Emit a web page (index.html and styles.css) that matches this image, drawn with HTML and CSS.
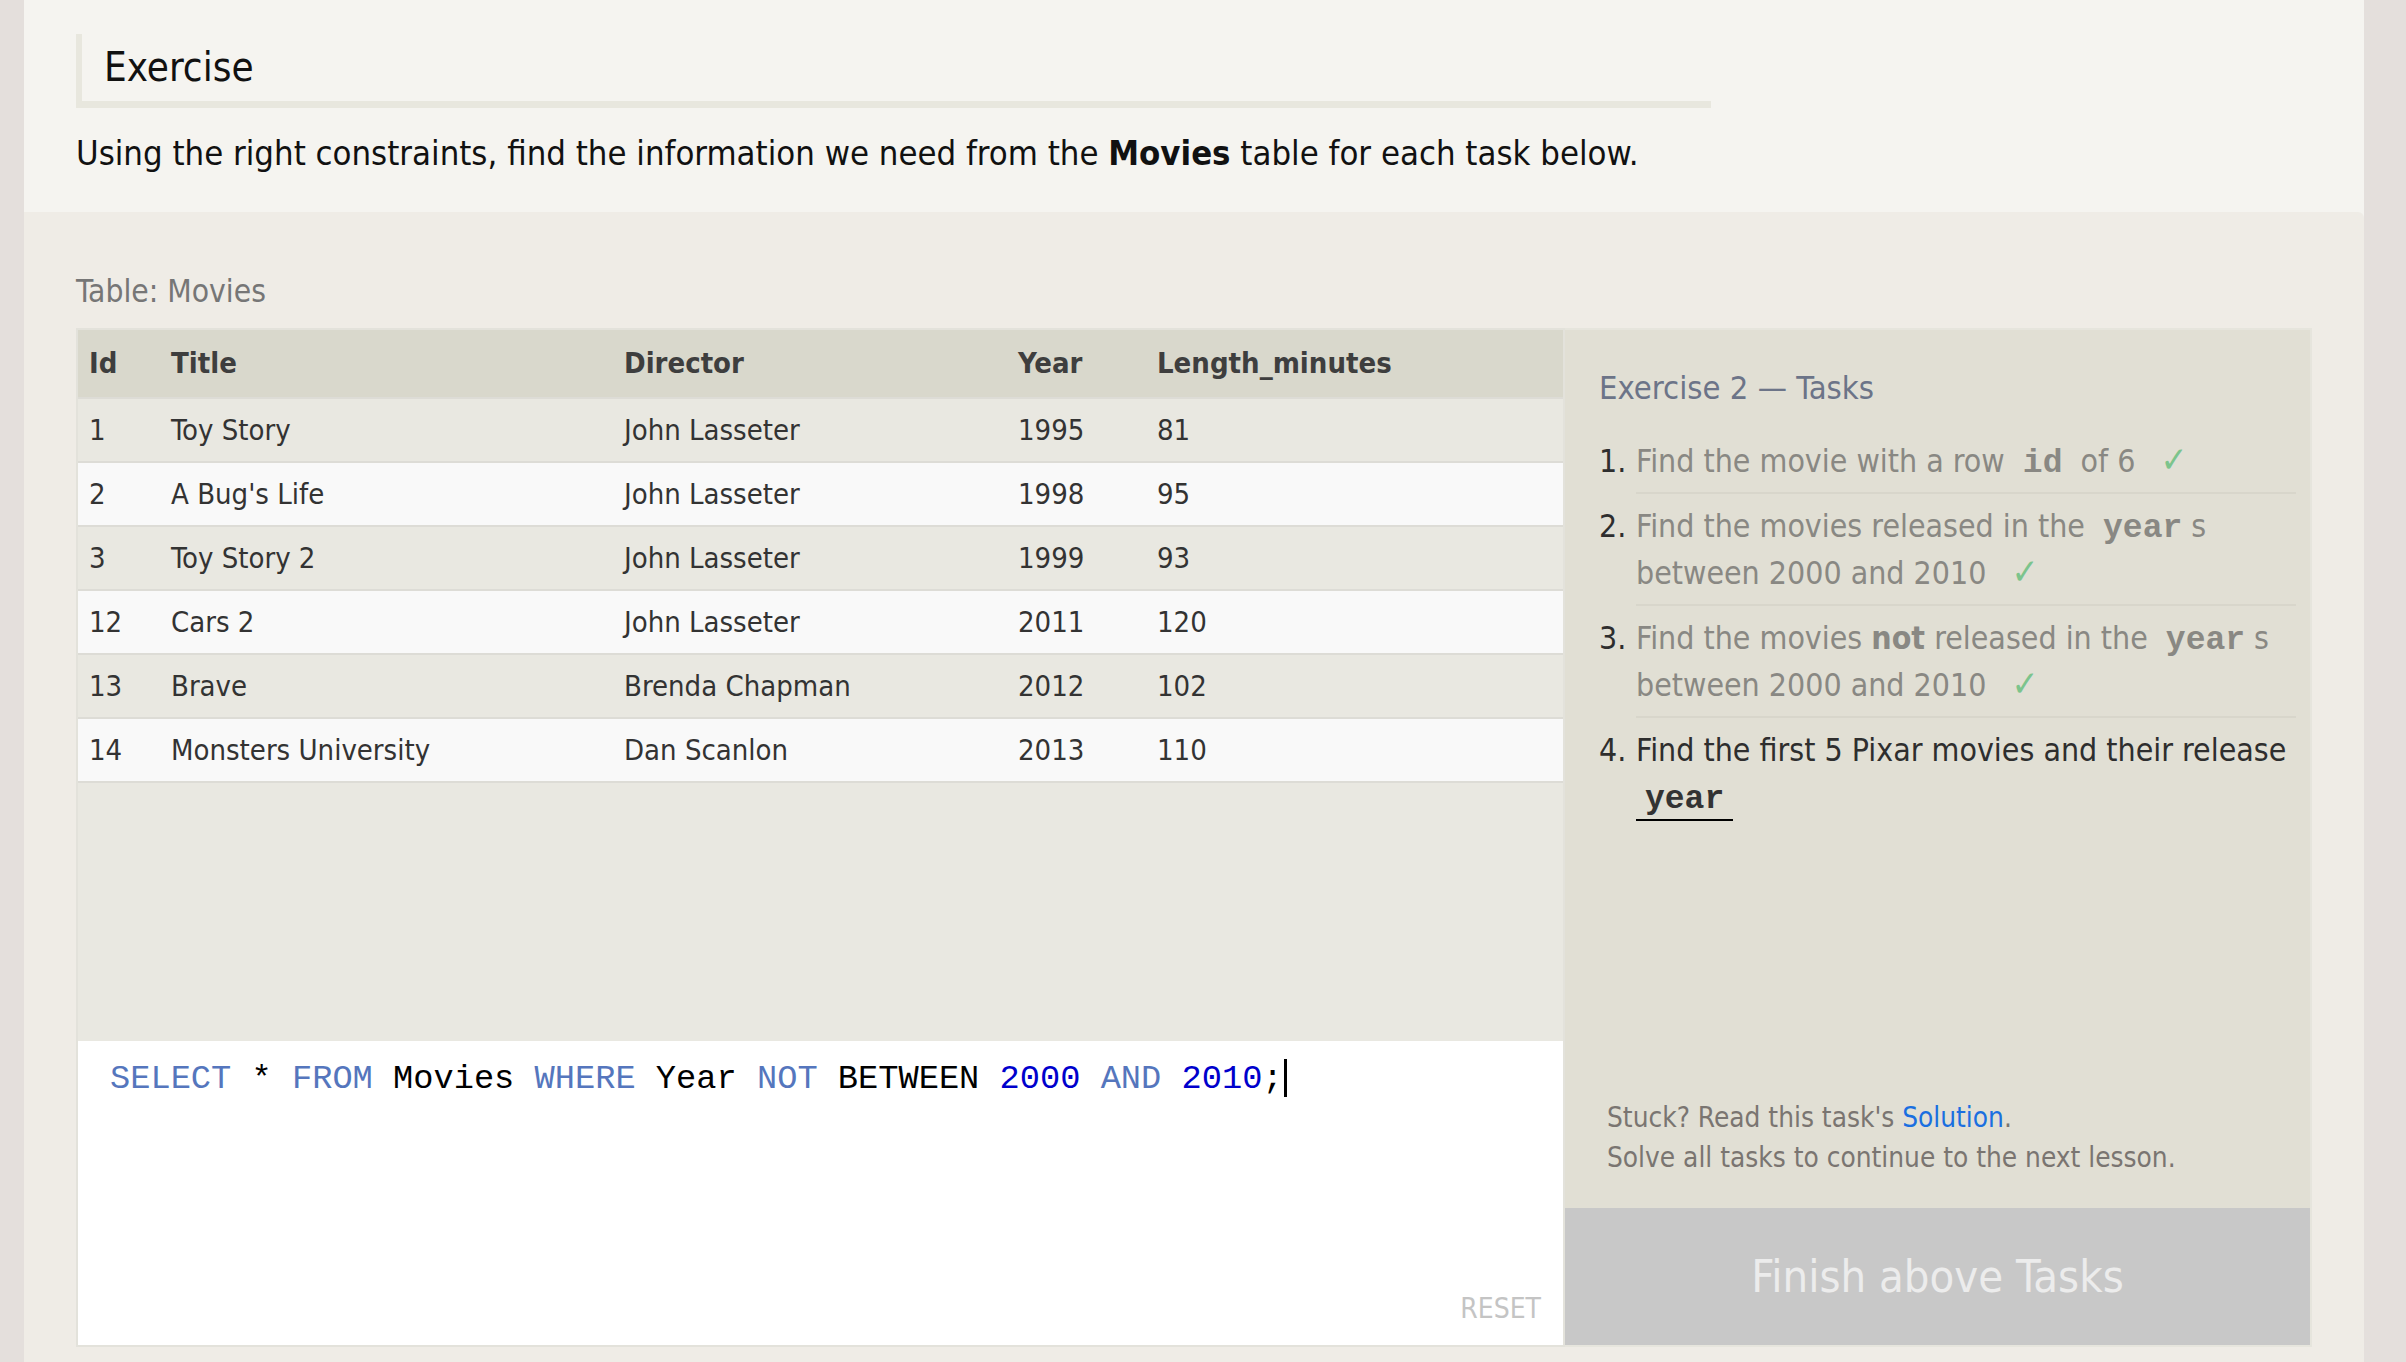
FILE: index.html
```html
<!DOCTYPE html>
<html lang="en">
<head>
<meta charset="utf-8">
<title>SQL Exercise</title>
<link rel="stylesheet" href="styles.css">
</head>
<body>
<div class="page">
  <section class="intro">
    <h2 class="intro-title">Exercise</h2>
    <p class="intro-text">Using the right constraints, find the information we need from the <strong>Movies</strong> table for each task below.</p>
  </section>
  <section class="content">
    <div class="table-label">Table: Movies</div>
    <div class="exercise">
      <div class="left">
        <table class="movies">
          <colgroup>
            <col class="c-id"><col class="c-title"><col class="c-dir"><col class="c-year"><col class="c-len">
          </colgroup>
          <thead>
            <tr><th>Id</th><th>Title</th><th>Director</th><th>Year</th><th>Length_minutes</th></tr>
          </thead>
          <tbody>
            <tr><td>1</td><td>Toy Story</td><td>John Lasseter</td><td>1995</td><td>81</td></tr>
            <tr><td>2</td><td>A Bug's Life</td><td>John Lasseter</td><td>1998</td><td>95</td></tr>
            <tr><td>3</td><td>Toy Story 2</td><td>John Lasseter</td><td>1999</td><td>93</td></tr>
            <tr><td>12</td><td>Cars 2</td><td>John Lasseter</td><td>2011</td><td>120</td></tr>
            <tr><td>13</td><td>Brave</td><td>Brenda Chapman</td><td>2012</td><td>102</td></tr>
            <tr><td>14</td><td>Monsters University</td><td>Dan Scanlon</td><td>2013</td><td>110</td></tr>
          </tbody>
        </table>
        <div class="table-fill"></div>
        <div class="editor">
          <div class="code"><span class="kw">SELECT</span> * <span class="kw">FROM</span> Movies <span class="kw">WHERE</span> Year <span class="kw">NOT</span> BETWEEN <span class="num">2000</span> <span class="kw">AND</span> <span class="num">2010</span>;<span class="caret"></span></div>
          <div class="reset">RESET</div>
        </div>
      </div>
      <div class="right">
        <div class="tasks">
          <h3 class="tasks-title">Exercise 2 — Tasks</h3>
          <ol class="task-list">
            <li class="task done"><span class="task-num">1.</span><div class="task-body">Find the movie with a row <code>id</code> of 6 <span class="check">✓</span></div></li>
            <li class="task done"><span class="task-num">2.</span><div class="task-body">Find the movies released in the <code>year</code>s between 2000 and 2010 <span class="check">✓</span></div></li>
            <li class="task done"><span class="task-num">3.</span><div class="task-body">Find the movies <strong>not</strong> released in the <code>year</code>s between 2000 and 2010 <span class="check">✓</span></div></li>
            <li class="task current"><span class="task-num">4.</span><div class="task-body">Find the first 5 Pixar movies and their release <code>year</code></div></li>
          </ol>
        </div>
        <div class="help">
          <div>Stuck? Read this task's <a class="link" href="#">Solution</a>.</div>
          <div>Solve all tasks to continue to the next lesson.</div>
        </div>
        <div class="finish">Finish above Tasks</div>
      </div>
    </div>
  </section>
</div>
</body>
</html>
```
FILE: styles.css
```css
html, body {
  margin: 0;
  padding: 0;
}
body {
  background: #e4dfdc;
  font-family: "DejaVu Sans Condensed", "DejaVu Sans", sans-serif;
  font-stretch: condensed;
  color: #111;
  height: 1362px;
  overflow: hidden;
}
.page {
  margin: 0 42px 0 24px;
  background: #f5f4f0;
  height: 1362px;
  display: flex;
  flex-direction: column;
}
.intro {
  padding: 34px 52px 0 52px;
  height: 178px;
}
.intro-title {
  margin: 0;
  width: 1607px;
  height: 67px;
  line-height: 67px;
  font-size: 40px;
  font-weight: normal;
  padding-left: 22px;
  border-left: 6px solid #e8e7de;
  border-bottom: 7px solid #e8e7de;
  color: #111;
}
.intro-text {
  margin: 21px 0 0 0;
  font-size: 34.4px;
  line-height: 48px;
  color: #111;
}
.intro-text strong {
  font-weight: bold;
}
.content {
  flex: 1;
  background: #efece6;
  border-top-right-radius: 6px;
  padding: 57px 52px 0 52px;
}
.table-label {
  font-size: 31.5px;
  line-height: 44px;
  color: #767676;
  margin-bottom: 15px;
}
.exercise {
  display: flex;
  height: 1019px;
}
.left {
  width: 1485px;
  border: 2px solid #e3e2db;
  background: #e9e8e1;
  display: flex;
  flex-direction: column;
}
.movies {
  width: 100%;
  border-collapse: collapse;
  table-layout: fixed;
  font-size: 29px;
  color: #333;
}
.c-id { width: 82px; }
.c-title { width: 453px; }
.c-dir { width: 394px; }
.c-year { width: 139px; }
.movies th {
  background: #d9d8cc;
  height: 67px;
  line-height: 67px;
  padding: 0 0 0 11px;
  text-align: left;
  font-weight: bold;
  color: #3e3e3e;
}
.movies td {
  height: 62px;
  line-height: 62px;
  padding: 0 0 0 11px;
  border-top: 2px solid #dddcd6;
  white-space: nowrap;
}
.movies tbody tr:nth-child(odd) td {
  background: #e9e8e1;
}
.movies tbody tr:nth-child(even) td {
  background: #f9f9f9;
}
.table-fill {
  flex: 1;
  border-top: 2px solid #dddcd6;
}
.editor {
  height: 304px;
  background: #ffffff;
  display: flex;
  flex-direction: column;
  box-sizing: border-box;
  padding: 14px 22px 18px 32px;
}
.code {
  flex: 1;
  font-family: "Liberation Mono", "Courier New", monospace;
  font-size: 33.7px;
  line-height: 48px;
  color: #000;
  white-space: pre;
}
.kw { color: #5576bd; }
.num { color: #0000cc; }
.caret {
  display: inline-block;
  width: 3px;
  height: 38px;
  background: #000;
  vertical-align: -9px;
  margin-left: 1px;
}
.reset {
  align-self: flex-end;
  font-size: 28px;
  line-height: 36px;
  color: #c4c4c4;
}
.right {
  flex: 1;
  background: #e1dfd4;
  border: 2px solid #e6e5dd;
  border-left: 0;
  display: flex;
  flex-direction: column;
}
.tasks {
  flex: 1;
  padding: 36px 14px 0 34px;
}
.tasks-title {
  margin: 0 0 19px 0;
  font-size: 32.5px;
  line-height: 44px;
  font-weight: normal;
  color: #6c7488;
}
.task-list {
  list-style: none;
  margin: 0;
  padding: 0;
  font-size: 31.8px;
  line-height: 47px;
}
.task {
  display: flex;
}
.task-num {
  width: 37px;
  flex: none;
  padding-top: 8px;
  color: #2e2e2e;
}
.task-body {
  flex: 1;
  padding: 8px 2px 8px 0;
  border-bottom: 2px solid #d8d6cb;
}
.task:last-child .task-body {
  border-bottom: 0;
}
.done .task-body {
  color: #898883;
}
.current .task-body {
  color: #2e2e2e;
}
.task-body strong {
  font-weight: bold;
}
.task-body code {
  font-family: "Liberation Mono", "Courier New", monospace;
  font-weight: bold;
  font-size: 33px;
  line-height: 1;
  margin: 0 9px;
}
.current .task-body code {
  display: inline-block;
  margin: 0;
  padding: 0 9px 3px 9px;
  border-bottom: 2px solid #000;
  color: #333;
}
.check {
  color: #7cc48c;
  font-size: 36px;
  line-height: 1;
  margin-left: 16px;
}
.help {
  padding: 0 20px 30px 42px;
  font-size: 27.75px;
  line-height: 40px;
  color: #7a7571;
}
.link {
  color: #1a6fe0;
  text-decoration: none;
}
.finish {
  height: 137px;
  line-height: 137px;
  background: #c8c8c8;
  color: #ececec;
  text-align: center;
  font-size: 45px;
}
```
